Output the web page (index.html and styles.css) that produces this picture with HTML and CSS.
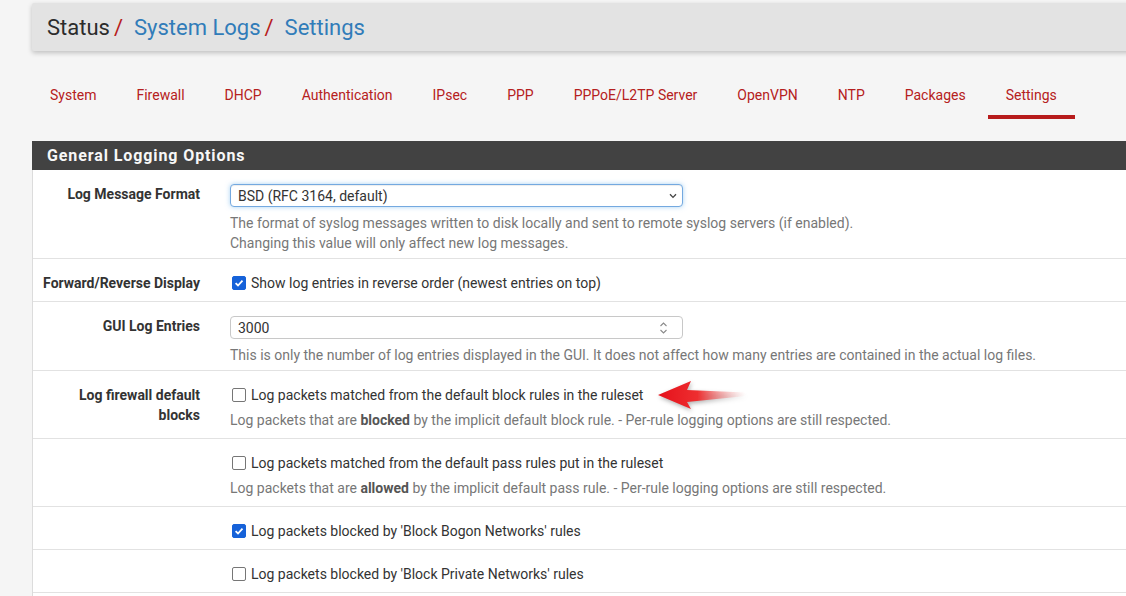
FILE: index.html
```html
<!DOCTYPE html>
<html lang="en">
<head>
<meta charset="utf-8">
<title>Status / System Logs / Settings</title>
<link rel="stylesheet" href="styles.css">
</head>
<body>
<div class="page">
  <header class="crumbs">
    <span class="crumb-root">Status</span><span class="sep">/</span><a class="crumb-link">System Logs</a><span class="sep">/</span><a class="crumb-link">Settings</a>
  </header>

  <nav class="tabs">
    <a class="tab">System</a>
    <a class="tab">Firewall</a>
    <a class="tab">DHCP</a>
    <a class="tab">Authentication</a>
    <a class="tab">IPsec</a>
    <a class="tab">PPP</a>
    <a class="tab">PPPoE/L2TP Server</a>
    <a class="tab">OpenVPN</a>
    <a class="tab">NTP</a>
    <a class="tab">Packages</a>
    <a class="tab active">Settings</a>
  </nav>

  <section class="panel">
    <h2 class="panel-title">General Logging Options</h2>
    <div class="panel-body">

      <div class="row has-input">
        <div class="label">Log Message Format</div>
        <div class="field">
          <div class="control focus">
            <span>BSD (RFC 3164, default)</span>
            <svg class="chev" width="8" height="6" viewBox="0 0 8 6"><path d="M1 1.2 L4 4.4 L7 1.2" fill="none" stroke="#444" stroke-width="1.3"/></svg>
          </div>
          <div class="help">The format of syslog messages written to disk locally and sent to remote syslog servers (if enabled).<br>Changing this value will only affect new log messages.</div>
        </div>
      </div>

      <div class="row">
        <div class="label">Forward/Reverse Display</div>
        <div class="field">
          <label class="check"><span class="box on"><svg width="10" height="10" viewBox="0 0 10 10"><path d="M1.6 5.2 L4 7.5 L8.5 2.6" fill="none" stroke="#fff" stroke-width="1.8"/></svg></span>Show log entries in reverse order (newest entries on top)</label>
        </div>
      </div>

      <div class="row has-input">
        <div class="label">GUI Log Entries</div>
        <div class="field">
          <div class="control">
            <span>3000</span>
            <svg class="spin" width="9" height="16" viewBox="0 0 9 16"><path d="M1.5 6 L4.5 3 L7.5 6" fill="none" stroke="#8a8a8a" stroke-width="1.1"/><path d="M1.5 10 L4.5 13 L7.5 10" fill="none" stroke="#8a8a8a" stroke-width="1.1"/></svg>
          </div>
          <div class="help">This is only the number of log entries displayed in the GUI. It does not affect how many entries are contained in the actual log files.</div>
        </div>
      </div>

      <div class="row">
        <div class="label">Log firewall default<br>blocks</div>
        <div class="field">
          <label class="check"><span class="box"></span>Log packets matched from the default block rules in the ruleset
            <svg class="arrow" width="92" height="34" viewBox="0 0 92 34">
              <defs>
                <linearGradient id="ag" x1="0" y1="0" x2="1" y2="0">
                  <stop offset="0" stop-color="#e5111b"/>
                  <stop offset="0.45" stop-color="#ee2e30"/>
                  <stop offset="1" stop-color="#f7a0a0" stop-opacity="0"/>
                </linearGradient>
              </defs>
              <path d="M2 16 L35 2 L31 11 L90 13.5 L90 17 L31 23 L35 30 Z" fill="url(#ag)"/>
            </svg>
          </label>
          <div class="help">Log packets that are <b>blocked</b> by the implicit default block rule. - Per-rule logging options are still respected.</div>
        </div>
      </div>

      <div class="row">
        <div class="label"></div>
        <div class="field">
          <label class="check"><span class="box"></span>Log packets matched from the default pass rules put in the ruleset</label>
          <div class="help">Log packets that are <b>allowed</b> by the implicit default pass rule. - Per-rule logging options are still respected.</div>
        </div>
      </div>

      <div class="row">
        <div class="label"></div>
        <div class="field">
          <label class="check"><span class="box on"><svg width="10" height="10" viewBox="0 0 10 10"><path d="M1.6 5.2 L4 7.5 L8.5 2.6" fill="none" stroke="#fff" stroke-width="1.8"/></svg></span>Log packets blocked by 'Block Bogon Networks' rules</label>
        </div>
      </div>

      <div class="row">
        <div class="label"></div>
        <div class="field">
          <label class="check"><span class="box"></span>Log packets blocked by 'Block Private Networks' rules</label>
        </div>
      </div>

    </div>
  </section>
</div>
</body>
</html>
```

FILE: styles.css
```css
html, body {
  margin: 0;
  padding: 0;
  background: #f5f5f5;
  font-family: Roboto, "Noto Sans", "Liberation Sans", sans-serif;
  overflow: hidden;
}

.page {
  width: 1120px;
  padding: 3px 0 0 32px;
}

/* breadcrumb bar */
.crumbs {
  background: #e3e3e3;
  padding: 12px 15px 10px;
  font-size: 22px;
  line-height: 26px;
  box-shadow: 0 2px 5px rgba(0, 0, 0, 0.22);
  border-radius: 2px;
}
.crumb-root { color: #2c2c2c; }
.crumb-link { color: #317cb9; text-decoration: none; }
.sep {
  color: #b71c1c;
  margin: 0 11px 0 4px;
}

/* tabs */
.tabs {
  display: flex;
  margin: 24px 0 0 -2px;
}
.tab {
  margin: 0 2px;
  padding: 10px 18px;
  font-size: 14px;
  line-height: 20px;
  color: #b52020;
  border-bottom: 4px solid transparent;
  white-space: nowrap;
}
.tab.active { border-bottom-color: #b71c1c; }

/* panel */
.panel { margin-top: 22px; }
.panel-title {
  margin: 0;
  background: #424242;
  color: #f7f7f7;
  font-size: 16px;
  font-weight: 700;
  letter-spacing: 0.9px;
  height: 29px;
  line-height: 29px;
  padding: 0 15px;
}
.panel-body {
  background: #fff;
  border-left: 1px solid #dcdcdc;
  padding-bottom: 40px;
}

.row {
  display: flex;
  padding: 14px 0 8px;
  border-bottom: 1px solid #e2e2e2;
}
.row.has-input { padding-bottom: 5px; }

.label {
  flex: 0 0 182px;
  box-sizing: border-box;
  padding: 0 15px 0 5px;
  text-align: right;
  font-size: 14px;
  line-height: 20px;
  font-weight: 700;
  color: #333;
  white-space: nowrap;
}

.field {
  flex: 1;
  padding-left: 15px;
  font-size: 14px;
  line-height: 20px;
  color: #333;
}

.control {
  width: 453px;
  height: 23px;
  box-sizing: border-box;
  display: flex;
  align-items: center;
  padding: 0 9px 0 7px;
  border: 1px solid #c8c8c8;
  border-radius: 4px;
  background: #fff;
  font-size: 14px;
  color: #333;
}
.control.focus {
  border-color: #74a9e0;
  box-shadow: inset 0 1px 1px rgba(0, 0, 0, 0.075), 0 0 5px rgba(102, 175, 233, 0.55);
  padding-right: 5px;
}
.chev { margin-left: auto; }
.spin { margin-left: auto; margin-right: 5px; }

.help {
  color: #777;
  margin-top: 5px;
}
.help b { color: #555; }
.control + .help { margin-top: 6px; }

.check {
  position: relative;
  display: flex;
  width: max-content;
  align-items: center;
  height: 20px;
  color: #333;
  white-space: nowrap;
}
.box {
  flex: 0 0 auto;
  width: 14px;
  height: 14px;
  box-sizing: border-box;
  margin: 0 5px 0 2px;
  border: 1.5px solid #767676;
  border-radius: 2px;
  background: #fff;
  display: flex;
  align-items: center;
  justify-content: center;
}
.box.on {
  background: #1662d9;
  border-color: #1662d9;
}

.arrow {
  position: absolute;
  left: calc(100% + 13px);
  top: -6px;
  filter: drop-shadow(1px 2px 2px rgba(0, 0, 0, 0.3));
}
```
